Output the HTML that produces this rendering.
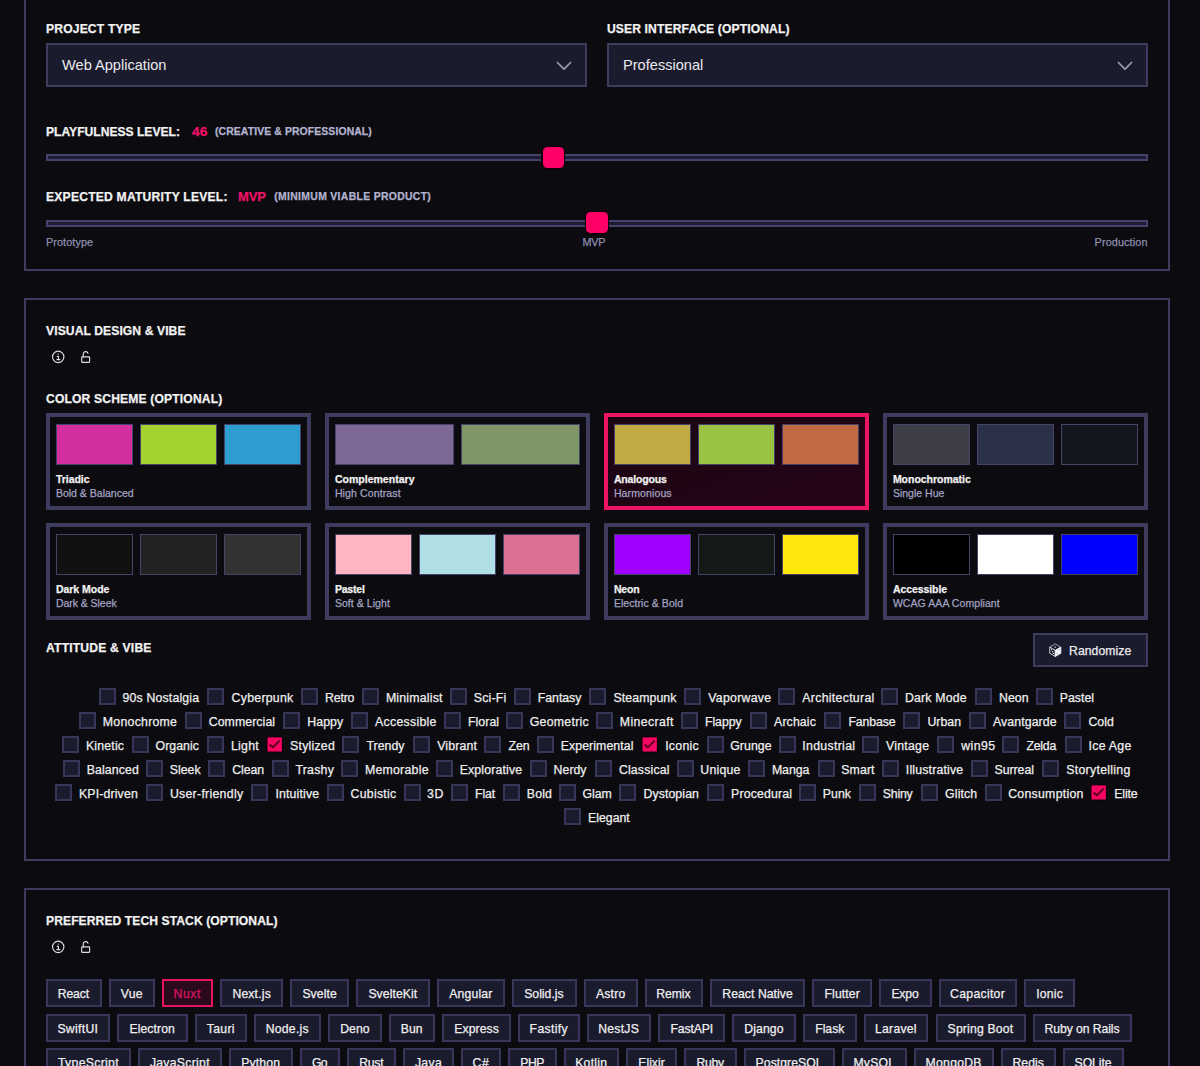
<!DOCTYPE html>
<html lang="en"><head><meta charset="utf-8"><title>Project Setup</title>
<style>
*{box-sizing:border-box;margin:0;padding:0}
html,body{background:#0b0b10;width:1200px;height:1066px;overflow:hidden}
body{font-family:"Liberation Sans",sans-serif;color:#f2f2f2;position:relative}
.panel{position:absolute;left:24px;width:1146px;border:2px solid #3d3b5e}
.t{position:absolute;white-space:pre;line-height:20px;height:20px;-webkit-text-stroke:0.25px}
.sel1{position:absolute;top:43px;width:541px;height:44px;border:2px solid #3d3b5e;background:#1b1b2e}
.sel1 svg{position:absolute;right:12.7px;top:16px;width:16px;height:10px}
.track{position:absolute;left:46px;width:1102px;height:7px;border:2px solid #45426b;background:#1d1d35}
.thumb{position:absolute;width:24.4px;height:24.4px;border-radius:6px;background:#12000a}
.thumb:after{content:"";position:absolute;left:1.6px;top:1.6px;right:1.6px;bottom:1.6px;border-radius:4.6px;background:#ff0066}
.card{position:absolute;width:265px;height:96.5px;border:4px solid #3d3b5e}
.card.sel{border-color:#ec1464;background:linear-gradient(160deg,#1a0511 0%,#260519 100%)}
.sw{position:absolute;height:41px;border:1px solid #45436a}
.cb{position:absolute;width:17px;height:17px;border:2px solid #393759;background:#1b1b2e}
.cbo{position:absolute;width:19px;height:19px}
.cbo path{fill:none;stroke:#5c001c;stroke-width:2;stroke-linecap:round;stroke-linejoin:round}
.tg{position:absolute;height:27.5px;border:2px solid #38365a;background:#1b1b2e}
.tg.sel{border-color:#e8145f;background:#2a0a1c}
.btn{position:absolute;left:1033px;top:633px;width:115px;height:34px;border:2px solid #3d3b5e;background:#1b1b2e}
.ic{position:absolute;fill:none;stroke:#dedede;stroke-width:1.15;stroke-linecap:round;stroke-linejoin:round}
</style></head>
<body>
<div class="panel" style="top:-40px;height:311px"></div>
<div class="panel" style="top:298px;height:563px"></div>
<div class="panel" style="top:888px;height:240px"></div>
<div class="sel1" style="left:46px"><svg viewBox="0 0 16 10"><path d="M1.4 1.5 L8 8.2 L14.6 1.5" fill="none" stroke="#9a9aae" stroke-width="1.75" stroke-linecap="round" stroke-linejoin="round"/></svg></div><div class="sel1" style="left:607px"><svg viewBox="0 0 16 10"><path d="M1.4 1.5 L8 8.2 L14.6 1.5" fill="none" stroke="#9a9aae" stroke-width="1.75" stroke-linecap="round" stroke-linejoin="round"/></svg></div>
<div class="track" style="top:154px"></div><div class="track" style="top:219.5px"></div>
<div class="thumb" style="left:541.1px;top:145.5px"></div><div class="thumb" style="left:584.8px;top:210.6px"></div>
<svg class="ic" style="left:50px;top:350px;width:16px;height:16px" viewBox="0 0 16 16"><circle cx="8.2" cy="6.85" r="5.7"/><path d="M8.2 4.1v0.1M7.3 6.4h1.1v3.0M6.9 9.6h3.0" stroke-width="1.15"/></svg>
<svg class="ic" style="left:78px;top:350px;width:16px;height:16px" viewBox="0 0 16 16"><rect x="3.7" y="6.9" width="7.9" height="5.4" rx="0.5"/><path d="M5.25 6.9V4.05a2.45 2.45 0 0 1 4.75 -0.85"/></svg>
<svg class="ic" style="left:50px;top:940.2px;width:16px;height:16px" viewBox="0 0 16 16"><circle cx="8.2" cy="6.85" r="5.7"/><path d="M8.2 4.1v0.1M7.3 6.4h1.1v3.0M6.9 9.6h3.0" stroke-width="1.15"/></svg>
<svg class="ic" style="left:78px;top:940.2px;width:16px;height:16px" viewBox="0 0 16 16"><rect x="3.7" y="6.9" width="7.9" height="5.4" rx="0.5"/><path d="M5.25 6.9V4.05a2.45 2.45 0 0 1 4.75 -0.85"/></svg>
<div class="btn"></div><svg style="position:absolute;left:1047.7px;top:641.9px;width:14.56px;height:16.38px" viewBox="0 0 16 18"><path d="M8 2.1 L14.1 5.7 L8 9.3 L1.9 5.7Z" fill="#1b1b2e" stroke="#a9a9ba" stroke-width="1"/><path d="M1.9 5.7 L8 9.3 V15.9 L1.9 12.3Z" fill="#1b1b2e" stroke="#d8d8e4" stroke-width="1"/><path d="M8 9.3 L14.1 5.7 V12.3 L8 15.9Z" fill="#f4f4fa" stroke="#f4f4fa" stroke-width="1"/><circle cx="8" cy="5.7" r="0.9" fill="#b5b5c5"/><circle cx="3.9" cy="8.6" r="0.7" fill="#eee"/><circle cx="6" cy="12.6" r="0.7" fill="#eee"/><circle cx="5" cy="10.6" r="0.7" fill="#eee"/><circle cx="12.2" cy="8.4" r="0.8" fill="#b9b9c6"/><circle cx="10" cy="12.6" r="0.8" fill="#a9a9b6"/></svg>
<div class="card" style="left:46px;top:413px"></div>
<div class="sw" style="left:56px;top:424px;width:77px;background:#d12e9e"></div>
<div class="sw" style="left:140px;top:424px;width:77px;background:#a3d12e"></div>
<div class="sw" style="left:224px;top:424px;width:77px;background:#2e9ed1"></div>
<div class="card" style="left:325px;top:413px"></div>
<div class="sw" style="left:335px;top:424px;width:119px;background:#7e6996"></div>
<div class="sw" style="left:461px;top:424px;width:119px;background:#7f9669"></div>
<div class="card sel" style="left:604px;top:413px"></div>
<div class="sw" style="left:614px;top:424px;width:77px;background:#c2aa43"></div>
<div class="sw" style="left:698px;top:424px;width:77px;background:#9ac243"></div>
<div class="sw" style="left:782px;top:424px;width:77px;background:#c26b43"></div>
<div class="card" style="left:883px;top:413px"></div>
<div class="sw" style="left:893px;top:424px;width:77px;background:#3e3e48"></div>
<div class="sw" style="left:977px;top:424px;width:77px;background:#2b3148"></div>
<div class="sw" style="left:1061px;top:424px;width:77px;background:#12161e"></div>
<div class="card" style="left:46px;top:523px"></div>
<div class="sw" style="left:56px;top:534px;width:77px;background:#111111"></div>
<div class="sw" style="left:140px;top:534px;width:77px;background:#222222"></div>
<div class="sw" style="left:224px;top:534px;width:77px;background:#333333"></div>
<div class="card" style="left:325px;top:523px"></div>
<div class="sw" style="left:335px;top:534px;width:77px;background:#ffb6c1"></div>
<div class="sw" style="left:419px;top:534px;width:77px;background:#b0e0e6"></div>
<div class="sw" style="left:503px;top:534px;width:77px;background:#db7093"></div>
<div class="card" style="left:604px;top:523px"></div>
<div class="sw" style="left:614px;top:534px;width:77px;background:#a000ff"></div>
<div class="sw" style="left:698px;top:534px;width:77px;background:#141a18"></div>
<div class="sw" style="left:782px;top:534px;width:77px;background:#ffe60d"></div>
<div class="card" style="left:883px;top:523px"></div>
<div class="sw" style="left:893px;top:534px;width:77px;background:#000000"></div>
<div class="sw" style="left:977px;top:534px;width:77px;background:#ffffff"></div>
<div class="sw" style="left:1061px;top:534px;width:77px;background:#0000ff"></div>
<div class="cb" style="left:99px;top:688px"></div>
<div class="cb" style="left:207px;top:688px"></div>
<div class="cb" style="left:301px;top:688px"></div>
<div class="cb" style="left:362px;top:688px"></div>
<div class="cb" style="left:450px;top:688px"></div>
<div class="cb" style="left:514px;top:688px"></div>
<div class="cb" style="left:589px;top:688px"></div>
<div class="cb" style="left:684px;top:688px"></div>
<div class="cb" style="left:778px;top:688px"></div>
<div class="cb" style="left:881px;top:688px"></div>
<div class="cb" style="left:975px;top:688px"></div>
<div class="cb" style="left:1036px;top:688px"></div>
<div class="cb" style="left:79px;top:712px"></div>
<div class="cb" style="left:185px;top:712px"></div>
<div class="cb" style="left:283px;top:712px"></div>
<div class="cb" style="left:351px;top:712px"></div>
<div class="cb" style="left:444px;top:712px"></div>
<div class="cb" style="left:506px;top:712px"></div>
<div class="cb" style="left:596px;top:712px"></div>
<div class="cb" style="left:681px;top:712px"></div>
<div class="cb" style="left:750px;top:712px"></div>
<div class="cb" style="left:824px;top:712px"></div>
<div class="cb" style="left:903px;top:712px"></div>
<div class="cb" style="left:969px;top:712px"></div>
<div class="cb" style="left:1064px;top:712px"></div>
<div class="cb" style="left:62px;top:736px"></div>
<div class="cb" style="left:132px;top:736px"></div>
<div class="cb" style="left:207px;top:736px"></div>
<svg class="cbo" style="left:265.8px;top:736.0px" viewBox="0 0 19 19"><rect x="0.2" y="0.1" width="16.9" height="16.7" fill="#12000a"/><rect x="1.55" y="1.4" width="14.3" height="14.1" fill="#f90464"/><path d="M4.25 9.0 L6.85 11.4 L13.05 5.3"/></svg>
<div class="cb" style="left:342px;top:736px"></div>
<div class="cb" style="left:413px;top:736px"></div>
<div class="cb" style="left:484px;top:736px"></div>
<div class="cb" style="left:537px;top:736px"></div>
<svg class="cbo" style="left:641.1px;top:736.0px" viewBox="0 0 19 19"><rect x="0.2" y="0.1" width="16.9" height="16.7" fill="#12000a"/><rect x="1.55" y="1.4" width="14.3" height="14.1" fill="#f90464"/><path d="M4.25 9.0 L6.85 11.4 L13.05 5.3"/></svg>
<div class="cb" style="left:707px;top:736px"></div>
<div class="cb" style="left:779px;top:736px"></div>
<div class="cb" style="left:862px;top:736px"></div>
<div class="cb" style="left:937px;top:736px"></div>
<div class="cb" style="left:1002px;top:736px"></div>
<div class="cb" style="left:1065px;top:736px"></div>
<div class="cb" style="left:63px;top:760px"></div>
<div class="cb" style="left:146px;top:760px"></div>
<div class="cb" style="left:208px;top:760px"></div>
<div class="cb" style="left:272px;top:760px"></div>
<div class="cb" style="left:341px;top:760px"></div>
<div class="cb" style="left:436px;top:760px"></div>
<div class="cb" style="left:530px;top:760px"></div>
<div class="cb" style="left:595px;top:760px"></div>
<div class="cb" style="left:677px;top:760px"></div>
<div class="cb" style="left:748px;top:760px"></div>
<div class="cb" style="left:818px;top:760px"></div>
<div class="cb" style="left:882px;top:760px"></div>
<div class="cb" style="left:971px;top:760px"></div>
<div class="cb" style="left:1042px;top:760px"></div>
<div class="cb" style="left:55px;top:784px"></div>
<div class="cb" style="left:146px;top:784px"></div>
<div class="cb" style="left:251px;top:784px"></div>
<div class="cb" style="left:327px;top:784px"></div>
<div class="cb" style="left:404px;top:784px"></div>
<div class="cb" style="left:451px;top:784px"></div>
<div class="cb" style="left:503px;top:784px"></div>
<div class="cb" style="left:559px;top:784px"></div>
<div class="cb" style="left:619px;top:784px"></div>
<div class="cb" style="left:707px;top:784px"></div>
<div class="cb" style="left:799px;top:784px"></div>
<div class="cb" style="left:859px;top:784px"></div>
<div class="cb" style="left:921px;top:784px"></div>
<div class="cb" style="left:985px;top:784px"></div>
<svg class="cbo" style="left:1090.2px;top:784.0px" viewBox="0 0 19 19"><rect x="0.2" y="0.1" width="16.9" height="16.7" fill="#12000a"/><rect x="1.55" y="1.4" width="14.3" height="14.1" fill="#f90464"/><path d="M4.25 9.0 L6.85 11.4 L13.05 5.3"/></svg>
<div class="cb" style="left:564px;top:808px"></div>
<div class="tg" style="left:46px;top:979px;width:56px"></div>
<div class="tg" style="left:109px;top:979px;width:46px"></div>
<div class="tg sel" style="left:162px;top:979px;width:51px"></div>
<div class="tg" style="left:220px;top:979px;width:63px"></div>
<div class="tg" style="left:290px;top:979px;width:59px"></div>
<div class="tg" style="left:356px;top:979px;width:74px"></div>
<div class="tg" style="left:437px;top:979px;width:68px"></div>
<div class="tg" style="left:512px;top:979px;width:65px"></div>
<div class="tg" style="left:584px;top:979px;width:54px"></div>
<div class="tg" style="left:645px;top:979px;width:58px"></div>
<div class="tg" style="left:710px;top:979px;width:95px"></div>
<div class="tg" style="left:812px;top:979px;width:60px"></div>
<div class="tg" style="left:879px;top:979px;width:53px"></div>
<div class="tg" style="left:939px;top:979px;width:78px"></div>
<div class="tg" style="left:1024px;top:979px;width:51px"></div>
<div class="tg" style="left:46px;top:1014px;width:64px"></div>
<div class="tg" style="left:117px;top:1014px;width:71px"></div>
<div class="tg" style="left:195px;top:1014px;width:52px"></div>
<div class="tg" style="left:254px;top:1014px;width:67px"></div>
<div class="tg" style="left:328px;top:1014px;width:54px"></div>
<div class="tg" style="left:389px;top:1014px;width:46px"></div>
<div class="tg" style="left:442px;top:1014px;width:69px"></div>
<div class="tg" style="left:518px;top:1014px;width:62px"></div>
<div class="tg" style="left:587px;top:1014px;width:64px"></div>
<div class="tg" style="left:658px;top:1014px;width:67px"></div>
<div class="tg" style="left:732px;top:1014px;width:64px"></div>
<div class="tg" style="left:803px;top:1014px;width:54px"></div>
<div class="tg" style="left:864px;top:1014px;width:64px"></div>
<div class="tg" style="left:936px;top:1014px;width:90px"></div>
<div class="tg" style="left:1033px;top:1014px;width:99px"></div>
<div class="tg" style="left:46px;top:1048px;width:85px"></div>
<div class="tg" style="left:138px;top:1048px;width:84px"></div>
<div class="tg" style="left:229px;top:1048px;width:64px"></div>
<div class="tg" style="left:300px;top:1048px;width:40px"></div>
<div class="tg" style="left:347px;top:1048px;width:49px"></div>
<div class="tg" style="left:403px;top:1048px;width:51px"></div>
<div class="tg" style="left:461px;top:1048px;width:40px"></div>
<div class="tg" style="left:508px;top:1048px;width:49px"></div>
<div class="tg" style="left:564px;top:1048px;width:55px"></div>
<div class="tg" style="left:626px;top:1048px;width:51px"></div>
<div class="tg" style="left:684px;top:1048px;width:53px"></div>
<div class="tg" style="left:744px;top:1048px;width:91px"></div>
<div class="tg" style="left:842px;top:1048px;width:65px"></div>
<div class="tg" style="left:914px;top:1048px;width:80px"></div>
<div class="tg" style="left:1001px;top:1048px;width:55px"></div>
<div class="tg" style="left:1063px;top:1048px;width:61px"></div>
<span class="t" style="left:46.0px;top:18.80px;font-size:12.1px;font-weight:700;letter-spacing:0.175px;">PROJECT TYPE</span>
<span class="t" style="left:607.0px;top:18.80px;font-size:12.1px;font-weight:700;letter-spacing:0.129px;">USER INTERFACE (OPTIONAL)</span>
<span class="t" style="left:46.0px;top:121.70px;font-size:12.1px;font-weight:700;letter-spacing:0.003px;">PLAYFULNESS LEVEL:</span>
<span class="t" style="left:191.7px;top:121.63px;font-size:12.3px;font-weight:700;color:#ee1166;transform-origin:0 50%;transform:scaleX(1.1251);">46</span>
<span class="t" style="left:215.0px;top:122.16px;font-size:10.4px;font-weight:700;color:#b4b4d0;letter-spacing:0.119px;">(CREATIVE &amp; PROFESSIONAL)</span>
<span class="t" style="left:46.0px;top:186.70px;font-size:12.1px;font-weight:700;letter-spacing:0.227px;">EXPECTED MATURITY LEVEL:</span>
<span class="t" style="left:238.3px;top:186.67px;font-size:12.2px;font-weight:700;color:#ee1166;transform-origin:0 50%;transform:scaleX(1.0597);">MVP</span>
<span class="t" style="left:274.3px;top:187.16px;font-size:10.4px;font-weight:700;color:#b4b4d0;letter-spacing:0.329px;">(MINIMUM VIABLE PRODUCT)</span>
<span class="t" style="left:46.0px;top:320.60px;font-size:12.1px;font-weight:700;letter-spacing:0.103px;">VISUAL DESIGN &amp; VIBE</span>
<span class="t" style="left:46.0px;top:389.30px;font-size:12.1px;font-weight:700;letter-spacing:0.165px;">COLOR SCHEME (OPTIONAL)</span>
<span class="t" style="left:46.0px;top:638.10px;font-size:12.1px;font-weight:700;letter-spacing:0.202px;">ATTITUDE &amp; VIBE</span>
<span class="t" style="left:46.0px;top:910.50px;font-size:12.1px;font-weight:700;letter-spacing:0.087px;">PREFERRED TECH STACK (OPTIONAL)</span>
<span class="t" style="left:62.0px;top:55.27px;font-size:14.6px;color:#e9e9ec;-webkit-text-stroke:0;">Web Application</span>
<span class="t" style="left:623.0px;top:55.27px;font-size:14.6px;color:#e9e9ec;-webkit-text-stroke:0;">Professional</span>
<span class="t" style="left:46.0px;top:232.43px;font-size:10.8px;color:#8f8fb0;letter-spacing:0.098px;">Prototype</span>
<span class="t" style="left:582.6px;top:232.43px;font-size:10.8px;color:#8f8fb0;letter-spacing:-0.303px;">MVP</span>
<span class="t" style="left:1094.6px;top:232.43px;font-size:10.8px;color:#8f8fb0;letter-spacing:0.131px;">Production</span>
<span class="t" style="left:1069.0px;top:640.97px;font-size:12.2px;color:#ededed;letter-spacing:0.080px;">Randomize</span>
<span class="t" style="left:55.9px;top:469.43px;font-size:10.5px;font-weight:700;letter-spacing:-0.024px;">Triadic</span>
<span class="t" style="left:55.9px;top:483.33px;font-size:10.5px;color:#a3a3c2;letter-spacing:0.010px;">Bold &amp; Balanced</span>
<span class="t" style="left:334.9px;top:469.43px;font-size:10.5px;font-weight:700;letter-spacing:0.019px;">Complementary</span>
<span class="t" style="left:334.9px;top:483.33px;font-size:10.5px;color:#a3a3c2;letter-spacing:0.128px;">High Contrast</span>
<span class="t" style="left:613.9px;top:469.43px;font-size:10.5px;font-weight:700;letter-spacing:-0.155px;">Analogous</span>
<span class="t" style="left:613.9px;top:483.33px;font-size:10.5px;color:#a3a3c2;letter-spacing:0.124px;">Harmonious</span>
<span class="t" style="left:892.9px;top:469.43px;font-size:10.5px;font-weight:700;letter-spacing:-0.021px;">Monochromatic</span>
<span class="t" style="left:892.9px;top:483.33px;font-size:10.5px;color:#a3a3c2;letter-spacing:0.011px;">Single Hue</span>
<span class="t" style="left:55.9px;top:579.43px;font-size:10.5px;font-weight:700;letter-spacing:-0.018px;">Dark Mode</span>
<span class="t" style="left:55.9px;top:593.33px;font-size:10.5px;color:#a3a3c2;letter-spacing:-0.040px;">Dark &amp; Sleek</span>
<span class="t" style="left:334.9px;top:579.43px;font-size:10.5px;font-weight:700;letter-spacing:-0.195px;">Pastel</span>
<span class="t" style="left:334.9px;top:593.33px;font-size:10.5px;color:#a3a3c2;letter-spacing:0.058px;">Soft &amp; Light</span>
<span class="t" style="left:613.9px;top:579.43px;font-size:10.5px;font-weight:700;letter-spacing:-0.138px;">Neon</span>
<span class="t" style="left:613.9px;top:593.33px;font-size:10.5px;color:#a3a3c2;letter-spacing:0.062px;">Electric &amp; Bold</span>
<span class="t" style="left:892.9px;top:579.43px;font-size:10.5px;font-weight:700;letter-spacing:-0.068px;">Accessible</span>
<span class="t" style="left:892.9px;top:593.33px;font-size:10.5px;color:#a3a3c2;letter-spacing:0.069px;">WCAG AAA Compliant</span>
<span class="t" style="left:122.6px;top:687.63px;font-size:12.3px;color:#efefef;letter-spacing:0.159px;">90s Nostalgia</span>
<span class="t" style="left:231.6px;top:687.63px;font-size:12.3px;color:#efefef;letter-spacing:0.271px;">Cyberpunk</span>
<span class="t" style="left:325.0px;top:687.63px;font-size:12.3px;color:#efefef;letter-spacing:-0.159px;">Retro</span>
<span class="t" style="left:385.9px;top:687.63px;font-size:12.3px;color:#efefef;letter-spacing:0.219px;">Minimalist</span>
<span class="t" style="left:473.8px;top:687.63px;font-size:12.3px;color:#efefef;letter-spacing:0.207px;">Sci-Fi</span>
<span class="t" style="left:537.8px;top:687.63px;font-size:12.3px;color:#efefef;letter-spacing:-0.029px;">Fantasy</span>
<span class="t" style="left:613.6px;top:687.63px;font-size:12.3px;color:#efefef;letter-spacing:0.072px;">Steampunk</span>
<span class="t" style="left:708.2px;top:687.63px;font-size:12.3px;color:#efefef;letter-spacing:0.292px;">Vaporwave</span>
<span class="t" style="left:802.3px;top:687.63px;font-size:12.3px;color:#efefef;letter-spacing:0.304px;">Architectural</span>
<span class="t" style="left:905.0px;top:687.63px;font-size:12.3px;color:#efefef;letter-spacing:0.171px;">Dark Mode</span>
<span class="t" style="left:999.0px;top:687.63px;font-size:12.3px;color:#efefef;letter-spacing:0.041px;">Neon</span>
<span class="t" style="left:1059.7px;top:687.63px;font-size:12.3px;color:#efefef;letter-spacing:0.037px;">Pastel</span>
<span class="t" style="left:102.8px;top:711.63px;font-size:12.3px;color:#efefef;letter-spacing:0.267px;">Monochrome</span>
<span class="t" style="left:208.7px;top:711.63px;font-size:12.3px;color:#efefef;letter-spacing:0.090px;">Commercial</span>
<span class="t" style="left:307.3px;top:711.63px;font-size:12.3px;color:#efefef;letter-spacing:0.083px;">Happy</span>
<span class="t" style="left:375.1px;top:711.63px;font-size:12.3px;color:#efefef;letter-spacing:0.276px;">Accessible</span>
<span class="t" style="left:468.0px;top:711.63px;font-size:12.3px;color:#efefef;letter-spacing:0.060px;">Floral</span>
<span class="t" style="left:529.7px;top:711.63px;font-size:12.3px;color:#efefef;letter-spacing:0.294px;">Geometric</span>
<span class="t" style="left:619.8px;top:711.63px;font-size:12.3px;color:#efefef;letter-spacing:0.384px;">Minecraft</span>
<span class="t" style="left:704.9px;top:711.63px;font-size:12.3px;color:#efefef;letter-spacing:-0.027px;">Flappy</span>
<span class="t" style="left:774.1px;top:711.63px;font-size:12.3px;color:#efefef;letter-spacing:0.114px;">Archaic</span>
<span class="t" style="left:848.4px;top:711.63px;font-size:12.3px;color:#efefef;letter-spacing:-0.110px;">Fanbase</span>
<span class="t" style="left:927.4px;top:711.63px;font-size:12.3px;color:#efefef;letter-spacing:0.030px;">Urban</span>
<span class="t" style="left:993.0px;top:711.63px;font-size:12.3px;color:#efefef;letter-spacing:0.095px;">Avantgarde</span>
<span class="t" style="left:1088.5px;top:711.63px;font-size:12.3px;color:#efefef;letter-spacing:-0.024px;">Cold</span>
<span class="t" style="left:85.9px;top:735.63px;font-size:12.3px;color:#efefef;letter-spacing:0.202px;">Kinetic</span>
<span class="t" style="left:155.5px;top:735.63px;font-size:12.3px;color:#efefef;letter-spacing:0.068px;">Organic</span>
<span class="t" style="left:231.0px;top:735.63px;font-size:12.3px;color:#efefef;letter-spacing:0.266px;">Light</span>
<span class="t" style="left:290.1px;top:735.63px;font-size:12.3px;color:#efefef;letter-spacing:0.231px;">Stylized</span>
<span class="t" style="left:366.4px;top:735.63px;font-size:12.3px;color:#efefef;letter-spacing:0.056px;">Trendy</span>
<span class="t" style="left:437.2px;top:735.63px;font-size:12.3px;color:#efefef;letter-spacing:0.178px;">Vibrant</span>
<span class="t" style="left:508.5px;top:735.63px;font-size:12.3px;color:#efefef;letter-spacing:0.001px;">Zen</span>
<span class="t" style="left:560.7px;top:735.63px;font-size:12.3px;color:#efefef;letter-spacing:0.088px;">Experimental</span>
<span class="t" style="left:665.2px;top:735.63px;font-size:12.3px;color:#efefef;letter-spacing:0.267px;">Iconic</span>
<span class="t" style="left:730.2px;top:735.63px;font-size:12.3px;color:#efefef;letter-spacing:0.073px;">Grunge</span>
<span class="t" style="left:802.3px;top:735.63px;font-size:12.3px;color:#efefef;letter-spacing:0.315px;">Industrial</span>
<span class="t" style="left:885.9px;top:735.63px;font-size:12.3px;color:#efefef;letter-spacing:0.273px;">Vintage</span>
<span class="t" style="left:961.2px;top:735.63px;font-size:12.3px;color:#efefef;letter-spacing:0.439px;">win95</span>
<span class="t" style="left:1026.4px;top:735.63px;font-size:12.3px;color:#efefef;letter-spacing:-0.202px;">Zelda</span>
<span class="t" style="left:1088.5px;top:735.63px;font-size:12.3px;color:#efefef;letter-spacing:0.288px;">Ice Age</span>
<span class="t" style="left:86.7px;top:759.63px;font-size:12.3px;color:#efefef;letter-spacing:0.132px;">Balanced</span>
<span class="t" style="left:169.8px;top:759.63px;font-size:12.3px;color:#efefef;letter-spacing:0.012px;">Sleek</span>
<span class="t" style="left:232.3px;top:759.63px;font-size:12.3px;color:#efefef;letter-spacing:-0.096px;">Clean</span>
<span class="t" style="left:295.4px;top:759.63px;font-size:12.3px;color:#efefef;letter-spacing:0.262px;">Trashy</span>
<span class="t" style="left:364.9px;top:759.63px;font-size:12.3px;color:#efefef;letter-spacing:0.264px;">Memorable</span>
<span class="t" style="left:459.7px;top:759.63px;font-size:12.3px;color:#efefef;letter-spacing:0.162px;">Explorative</span>
<span class="t" style="left:553.6px;top:759.63px;font-size:12.3px;color:#efefef;letter-spacing:0.031px;">Nerdy</span>
<span class="t" style="left:618.9px;top:759.63px;font-size:12.3px;color:#efefef;letter-spacing:0.168px;">Classical</span>
<span class="t" style="left:700.3px;top:759.63px;font-size:12.3px;color:#efefef;letter-spacing:0.209px;">Unique</span>
<span class="t" style="left:771.9px;top:759.63px;font-size:12.3px;color:#efefef;letter-spacing:-0.041px;">Manga</span>
<span class="t" style="left:841.2px;top:759.63px;font-size:12.3px;color:#efefef;letter-spacing:0.135px;">Smart</span>
<span class="t" style="left:905.8px;top:759.63px;font-size:12.3px;color:#efefef;letter-spacing:0.175px;">Illustrative</span>
<span class="t" style="left:994.6px;top:759.63px;font-size:12.3px;color:#efefef;letter-spacing:-0.050px;">Surreal</span>
<span class="t" style="left:1066.3px;top:759.63px;font-size:12.3px;color:#efefef;letter-spacing:0.289px;">Storytelling</span>
<span class="t" style="left:79.0px;top:783.63px;font-size:12.3px;color:#efefef;letter-spacing:0.146px;">KPI-driven</span>
<span class="t" style="left:169.9px;top:783.63px;font-size:12.3px;color:#efefef;letter-spacing:0.288px;">User-friendly</span>
<span class="t" style="left:275.5px;top:783.63px;font-size:12.3px;color:#efefef;letter-spacing:0.143px;">Intuitive</span>
<span class="t" style="left:350.6px;top:783.63px;font-size:12.3px;color:#efefef;letter-spacing:0.263px;">Cubistic</span>
<span class="t" style="left:427.0px;top:783.63px;font-size:12.3px;color:#efefef;letter-spacing:0.693px;">3D</span>
<span class="t" style="left:475.0px;top:783.63px;font-size:12.3px;color:#efefef;letter-spacing:-0.135px;">Flat</span>
<span class="t" style="left:526.8px;top:783.63px;font-size:12.3px;color:#efefef;letter-spacing:0.147px;">Bold</span>
<span class="t" style="left:582.5px;top:783.63px;font-size:12.3px;color:#efefef;letter-spacing:-0.015px;">Glam</span>
<span class="t" style="left:643.4px;top:783.63px;font-size:12.3px;color:#efefef;letter-spacing:0.109px;">Dystopian</span>
<span class="t" style="left:731.1px;top:783.63px;font-size:12.3px;color:#efefef;letter-spacing:0.171px;">Procedural</span>
<span class="t" style="left:822.8px;top:783.63px;font-size:12.3px;color:#efefef;letter-spacing:0.051px;">Punk</span>
<span class="t" style="left:882.8px;top:783.63px;font-size:12.3px;color:#efefef;letter-spacing:-0.201px;">Shiny</span>
<span class="t" style="left:945.1px;top:783.63px;font-size:12.3px;color:#efefef;letter-spacing:0.126px;">Glitch</span>
<span class="t" style="left:1008.2px;top:783.63px;font-size:12.3px;color:#efefef;letter-spacing:0.276px;">Consumption</span>
<span class="t" style="left:1114.2px;top:783.63px;font-size:12.3px;color:#efefef;letter-spacing:-0.121px;">Elite</span>
<span class="t" style="left:588.0px;top:807.63px;font-size:12.3px;color:#efefef;letter-spacing:0.006px;">Elegant</span>
<span class="t" style="left:57.7px;top:984.27px;font-size:12.2px;color:#efefef;letter-spacing:-0.091px;">React</span>
<span class="t" style="left:120.8px;top:984.27px;font-size:12.2px;color:#efefef;letter-spacing:0.276px;">Vue</span>
<span class="t" style="left:173.5px;top:984.27px;font-size:12.2px;color:#dc1364;letter-spacing:0.612px;">Nuxt</span>
<span class="t" style="left:232.4px;top:984.27px;font-size:12.2px;color:#efefef;letter-spacing:0.185px;">Next.js</span>
<span class="t" style="left:302.4px;top:984.27px;font-size:12.2px;color:#efefef;letter-spacing:0.087px;">Svelte</span>
<span class="t" style="left:368.4px;top:984.27px;font-size:12.2px;color:#efefef;letter-spacing:0.085px;">SvelteKit</span>
<span class="t" style="left:449.3px;top:984.27px;font-size:12.2px;color:#efefef;letter-spacing:0.156px;">Angular</span>
<span class="t" style="left:524.2px;top:984.27px;font-size:12.2px;color:#efefef;letter-spacing:0.019px;">Solid.js</span>
<span class="t" style="left:595.9px;top:984.27px;font-size:12.2px;color:#efefef;letter-spacing:0.254px;">Astro</span>
<span class="t" style="left:656.2px;top:984.27px;font-size:12.2px;color:#efefef;letter-spacing:-0.037px;">Remix</span>
<span class="t" style="left:722.3px;top:984.27px;font-size:12.2px;color:#efefef;letter-spacing:0.060px;">React Native</span>
<span class="t" style="left:824.5px;top:984.27px;font-size:12.2px;color:#efefef;letter-spacing:0.127px;">Flutter</span>
<span class="t" style="left:891.4px;top:984.27px;font-size:12.2px;color:#efefef;letter-spacing:-0.160px;">Expo</span>
<span class="t" style="left:950.1px;top:984.27px;font-size:12.2px;color:#efefef;letter-spacing:0.311px;">Capacitor</span>
<span class="t" style="left:1036.2px;top:984.27px;font-size:12.2px;color:#efefef;letter-spacing:0.218px;">Ionic</span>
<span class="t" style="left:57.4px;top:1018.87px;font-size:12.2px;color:#efefef;letter-spacing:0.315px;">SwiftUI</span>
<span class="t" style="left:129.4px;top:1018.87px;font-size:12.2px;color:#efefef;letter-spacing:0.107px;">Electron</span>
<span class="t" style="left:206.8px;top:1018.87px;font-size:12.2px;color:#efefef;letter-spacing:0.333px;">Tauri</span>
<span class="t" style="left:265.7px;top:1018.87px;font-size:12.2px;color:#efefef;letter-spacing:0.274px;">Node.js</span>
<span class="t" style="left:340.2px;top:1018.87px;font-size:12.2px;color:#efefef;letter-spacing:0.061px;">Deno</span>
<span class="t" style="left:400.7px;top:1018.87px;font-size:12.2px;color:#efefef;letter-spacing:0.083px;">Bun</span>
<span class="t" style="left:454.2px;top:1018.87px;font-size:12.2px;color:#efefef;letter-spacing:0.109px;">Express</span>
<span class="t" style="left:529.6px;top:1018.87px;font-size:12.2px;color:#efefef;letter-spacing:0.360px;">Fastify</span>
<span class="t" style="left:598.2px;top:1018.87px;font-size:12.2px;color:#efefef;letter-spacing:0.265px;">NestJS</span>
<span class="t" style="left:670.5px;top:1018.87px;font-size:12.2px;color:#efefef;letter-spacing:-0.125px;">FastAPI</span>
<span class="t" style="left:744.3px;top:1018.87px;font-size:12.2px;color:#efefef;letter-spacing:0.124px;">Django</span>
<span class="t" style="left:815.2px;top:1018.87px;font-size:12.2px;color:#efefef;letter-spacing:0.016px;">Flask</span>
<span class="t" style="left:875.1px;top:1018.87px;font-size:12.2px;color:#efefef;letter-spacing:0.235px;">Laravel</span>
<span class="t" style="left:947.6px;top:1018.87px;font-size:12.2px;color:#efefef;letter-spacing:0.187px;">Spring Boot</span>
<span class="t" style="left:1044.5px;top:1018.87px;font-size:12.2px;color:#efefef;letter-spacing:-0.068px;">Ruby on Rails</span>
<span class="t" style="left:58.0px;top:1053.47px;font-size:12.2px;color:#efefef;letter-spacing:0.331px;">TypeScript</span>
<span class="t" style="left:149.9px;top:1053.47px;font-size:12.2px;color:#efefef;letter-spacing:0.305px;">JavaScript</span>
<span class="t" style="left:241.3px;top:1053.47px;font-size:12.2px;color:#efefef;letter-spacing:0.145px;">Python</span>
<span class="t" style="left:311.9px;top:1053.47px;font-size:12.2px;color:#efefef;letter-spacing:-0.658px;">Go</span>
<span class="t" style="left:359.3px;top:1053.47px;font-size:12.2px;color:#efefef;letter-spacing:-0.255px;">Rust</span>
<span class="t" style="left:414.9px;top:1053.47px;font-size:12.2px;color:#efefef;letter-spacing:0.356px;">Java</span>
<span class="t" style="left:472.5px;top:1053.47px;font-size:12.2px;color:#efefef;letter-spacing:0.596px;">C#</span>
<span class="t" style="left:520.2px;top:1053.47px;font-size:12.2px;color:#efefef;letter-spacing:-0.425px;">PHP</span>
<span class="t" style="left:575.2px;top:1053.47px;font-size:12.2px;color:#efefef;letter-spacing:0.270px;">Kotlin</span>
<span class="t" style="left:638.3px;top:1053.47px;font-size:12.2px;color:#efefef;letter-spacing:-0.000px;">Elixir</span>
<span class="t" style="left:696.4px;top:1053.47px;font-size:12.2px;color:#efefef;letter-spacing:-0.248px;">Ruby</span>
<span class="t" style="left:755.6px;top:1053.47px;font-size:12.2px;color:#efefef;letter-spacing:0.063px;">PostgreSQL</span>
<span class="t" style="left:853.5px;top:1053.47px;font-size:12.2px;color:#efefef;letter-spacing:0.205px;">MySQL</span>
<span class="t" style="left:925.6px;top:1053.47px;font-size:12.2px;color:#efefef;letter-spacing:0.282px;">MongoDB</span>
<span class="t" style="left:1012.5px;top:1053.47px;font-size:12.2px;color:#efefef;letter-spacing:0.035px;">Redis</span>
<span class="t" style="left:1074.6px;top:1053.47px;font-size:12.2px;color:#efefef;letter-spacing:-0.056px;">SQLite</span>
</body></html>
